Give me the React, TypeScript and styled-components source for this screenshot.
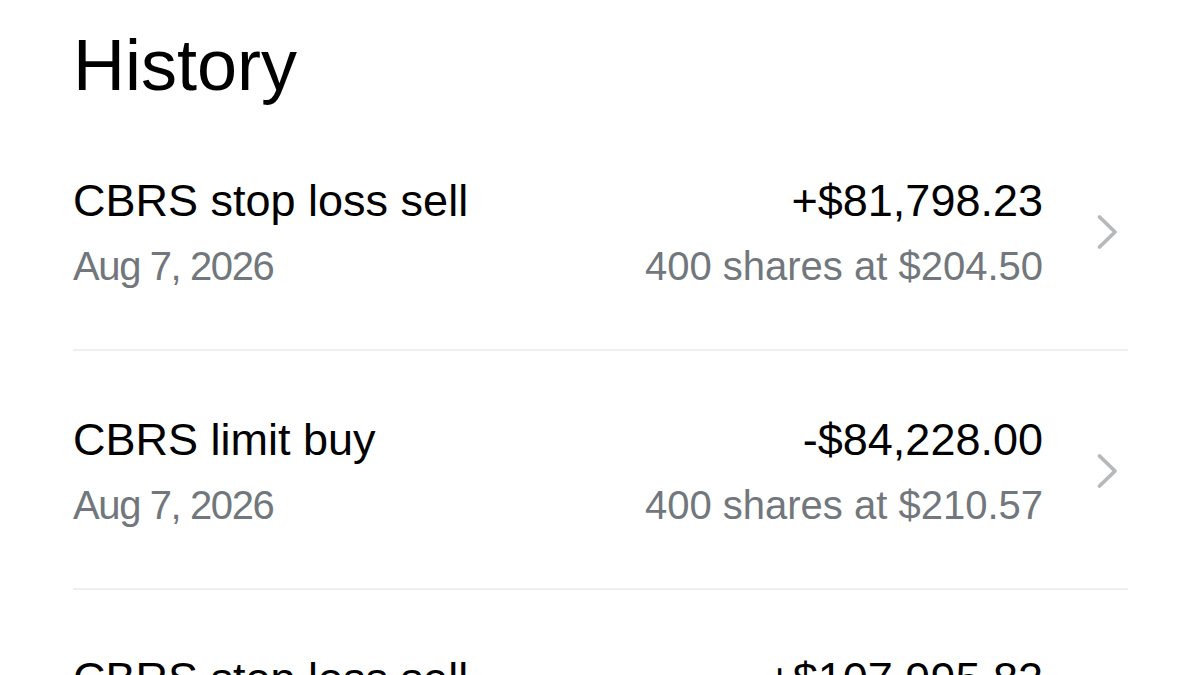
import React from "react";
import styled, { createGlobalStyle } from "styled-components";

const GlobalStyle = createGlobalStyle`
  body {
    margin: 0;
    background: #ffffff;
    font-family: "Liberation Sans", Arial, sans-serif;
    color: #000;
  }
`;

const Page = styled.div`
  padding: 0 72px 0 73px;
`;

const Heading = styled.h1`
  margin: 22px 0 4px;
  font-size: 72px;
  line-height: 86px;
  font-weight: 400;
  letter-spacing: 0;
`;

const Row = styled.div`
  display: flex;
  align-items: center;
  padding: 62px 0 59px;
  border-bottom: 2px solid #efefef;
`;

const Left = styled.div`
  flex: 1;
  display: flex;
  flex-direction: column;
  gap: 14px;
`;

const Right = styled(Left)`
  flex: none;
  align-items: flex-end;
`;

const Title = styled.div`
  font-size: 45px;
  line-height: 54px;
  color: #000;
  white-space: nowrap;
`;

const Sub = styled.div<{ $tight?: boolean }>`
  font-size: 40px;
  line-height: 48px;
  color: #71777c;
  white-space: nowrap;
  letter-spacing: ${(p) => (p.$tight ? "-1.4px" : "0")};
`;

const Chevron = styled.svg`
  flex: none;
  width: 36px;
  height: 36px;
  margin-left: 49px;
`;

interface Trade {
  title: string;
  date: string;
  amount: string;
  detail: string;
}

const trades: Trade[] = [
  {
    title: "CBRS stop loss sell",
    date: "Aug 7, 2026",
    amount: "+$81,798.23",
    detail: "400 shares at $204.50",
  },
  {
    title: "CBRS limit buy",
    date: "Aug 7, 2026",
    amount: "-$84,228.00",
    detail: "400 shares at $210.57",
  },
  {
    title: "CBRS stop loss sell",
    date: "Aug 6, 2026",
    amount: "+$107,995.82",
    detail: "400 shares at $269.99",
  },
];

const App: React.FC = () => {
  return (
    <Page>
      <GlobalStyle />
      <Heading>History</Heading>
      {trades.map((t, i) => (
        <Row key={i}>
          <Left>
            <Title>{t.title}</Title>
            <Sub $tight>{t.date}</Sub>
          </Left>
          <Right>
            <Title>{t.amount}</Title>
            <Sub>{t.detail}</Sub>
          </Right>
          <Chevron viewBox="0 0 36 36">
            <path
              d="M7.5 3 L23 18 L7.5 33"
              fill="none"
              stroke="#b5b9bc"
              strokeWidth="3.8"
              strokeLinecap="round"
              strokeLinejoin="round"
            />
          </Chevron>
        </Row>
      ))}
    </Page>
  );
};

export default App;
